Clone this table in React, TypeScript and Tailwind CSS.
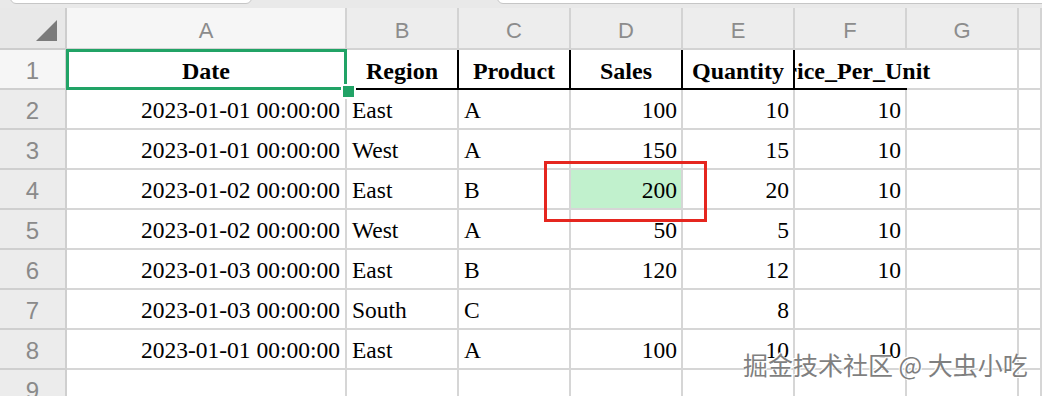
import clsx from 'clsx';

const cols = ['A', 'B', 'C', 'D', 'E', 'F', 'G', ''];

const rows = [
  ['2023-01-01 00:00:00', 'East', 'A', '100', '10', '10'],
  ['2023-01-01 00:00:00', 'West', 'A', '150', '15', '10'],
  ['2023-01-02 00:00:00', 'East', 'B', '200', '20', '10'],
  ['2023-01-02 00:00:00', 'West', 'A', '50', '5', '10'],
  ['2023-01-03 00:00:00', 'East', 'B', '120', '12', '10'],
  ['2023-01-03 00:00:00', 'South', 'C', '', '8', ''],
  ['2023-01-01 00:00:00', 'East', 'A', '100', '10', '10'],
];

const grid = 'border-r-2 border-b-2 border-[#d6d6d6]';
const serif = "font-['Liberation_Serif',serif]";

function RowHead({ n, active }: { n: number; active?: boolean }) {
  return (
    <div
      className={clsx(
        'flex items-center justify-center pt-[3px] text-[24px] text-[#8a8a8a] border-r-2 border-b-2 border-[#cfcfcf]',
        active ? 'bg-[#f6f6f6]' : 'bg-[#ececec]',
      )}
    >
      {n}
    </div>
  );
}

export default function App() {
  return (
    <div className="relative w-[1042px] h-[396px] overflow-hidden bg-white font-['Liberation_Sans',sans-serif]">
      {/* Toolbar edge */}
      <div className="h-[8px] bg-[#e9e9e9] flex items-start overflow-hidden">
        <div className="ml-[10px] -mt-[16px] w-[242px] h-[20px] shrink-0 rounded-md border border-[#c6c6c6] bg-white" />
        <div className="ml-[245px] -mt-[16px] h-[20px] flex-1 -mr-[20px] rounded-md border border-[#c6c6c6] bg-white" />
      </div>

      <div className="grid grid-cols-[67px_280px_112px_112px_112px_112px_112px_112px_1fr] grid-rows-[42px] auto-rows-[40px]">
        {/* Column headers */}
        <div className="flex items-end justify-end pr-[8px] pb-[7px] bg-[#e8e8e8] border-r-2 border-b-2 border-[#cdcdcd]">
          <svg width="21" height="21" viewBox="0 0 21 21">
            <polygon points="21,0 21,21 0,21" fill="#7b7b7b" />
          </svg>
        </div>
        {cols.map((c, i) => (
          <div
            key={i}
            className={clsx(
              'flex items-center justify-center pt-[4px] text-[22px] text-[#8c8c8c] border-r-2 border-b-2 border-[#d3d3d3]',
              c === 'A' ? 'bg-[#f6f6f6]' : 'bg-[#ededed]',
            )}
          >
            {c}
          </div>
        ))}

        {/* Row 1 */}
        <RowHead n={1} active />
        <div className={clsx('relative flex items-center justify-center pt-[3px] font-bold text-[24px] text-black', serif, grid)}>
          Date
          <div className="absolute -left-[1px] -top-[1px] -right-[2px] -bottom-[2px] border-[3px] border-[#21a366]" />
          <div className="absolute left-[274px] top-[34px] w-[15px] h-[15px] border-2 border-white bg-[#21a366]" />
        </div>
        {['Region', 'Product', 'Sales', 'Quantity'].map((h) => (
          <div
            key={h}
            className={clsx(
              'flex items-center justify-center pt-[3px] font-bold text-[24px] text-black border-r-2 border-b-2 border-black whitespace-nowrap',
              serif,
            )}
          >
            {h}
          </div>
        ))}
        <div className="col-span-2 flex overflow-hidden">
          <div
            className={clsx(
              'w-[112px] shrink-0 flex items-center justify-center pt-[3px] font-bold text-[24px] text-black border-b-2 border-black whitespace-nowrap',
              serif,
            )}
          >
            Price_Per_Unit
          </div>
          <div className={clsx('flex-1', grid)} />
        </div>
        <div className={grid} />

        {/* Data rows */}
        {rows.map((r, ri) => (
          <div key={ri} className="contents">
            <RowHead n={ri + 2} />
            <div className={clsx('flex items-center justify-end pt-[4px] pr-[5px] text-[23.5px] text-black whitespace-nowrap', serif, grid)}>
              {r[0]}
            </div>
            <div className={clsx('flex items-center pt-[4px] pl-[5px] text-[23.5px] text-black', serif, grid)}>{r[1]}</div>
            <div className={clsx('flex items-center pt-[4px] pl-[5px] text-[23.5px] text-black', serif, grid)}>{r[2]}</div>
            <div
              className={clsx(
                'relative flex items-center justify-end pt-[4px] pr-[4px] text-[23.5px] text-black',
                serif,
                grid,
                ri === 2 && 'bg-[#c1f1cd]',
              )}
            >
              {r[3]}
              {ri === 2 && (
                <div className="absolute -left-[27px] -top-[9px] w-[163px] h-[61px] border-[3px] border-[#e5261f] z-10" />
              )}
            </div>
            <div className={clsx('flex items-center justify-end pt-[4px] pr-[4px] text-[23.5px] text-black', serif, grid)}>{r[4]}</div>
            <div className={clsx('flex items-center justify-end pt-[4px] pr-[4px] text-[23.5px] text-black', serif, grid)}>{r[5]}</div>
            <div className={grid} />
            <div className={grid} />
          </div>
        ))}

        {/* Row 9 */}
        <RowHead n={9} />
        {cols.map((_, i) => (
          <div key={i} className={grid} />
        ))}
      </div>

      {/* Watermark */}
      <div className="absolute left-[743px] top-[352px] z-20 text-[25px] leading-none text-[#7f7f7f] whitespace-nowrap font-['Noto_Sans_CJK_SC',sans-serif] [text-shadow:1px_1px_0_#ffffff,-1px_-1px_0_#ffffff]">
        掘金技术社区 @ 大虫小吃
      </div>
    </div>
  );
}
